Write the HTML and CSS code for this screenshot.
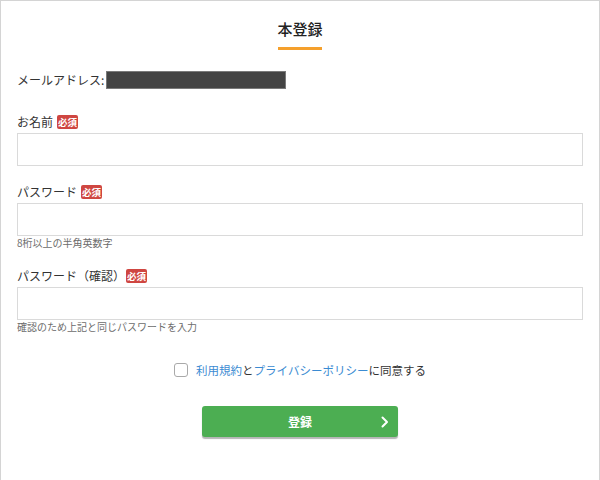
FILE: index.html
```html
<!DOCTYPE html>
<html lang="ja">
<head>
<meta charset="utf-8">
<link rel="stylesheet" href="styles.css">
</head>
<body>
<div class="page">
  <div class="title-wrap">
    <h1 class="title">本登録</h1>
    <div class="title-bar"></div>
  </div>

  <div class="email-row">
    <span class="email-label">メールアドレス:</span>
    <span class="email-mask"></span>
  </div>

  <div class="field field-first">
    <div class="label-row"><span class="label">お名前</span><span class="badge">必須</span></div>
    <div class="input"></div>
  </div>

  <div class="field">
    <div class="label-row"><span class="label">パスワード</span><span class="badge">必須</span></div>
    <div class="input"></div>
    <div class="hint">8桁以上の半角英数字</div>
  </div>

  <div class="field">
    <div class="label-row"><span class="label">パスワード（確認）</span><span class="badge badge-tight">必須</span></div>
    <div class="input"></div>
    <div class="hint">確認のため上記と同じパスワードを入力</div>
  </div>

  <div class="agree-row">
    <span class="checkbox"></span>
    <span class="agree-text"><a class="link">利用規約</a>と<a class="link">プライバシーポリシー</a>に同意する</span>
  </div>

  <div class="btn-row">
    <div class="btn">
      <span class="btn-text">登録</span>
      <svg class="chev" width="8" height="12" viewBox="0 0 8 12"><path d="M1.5 1.5 L6 6 L1.5 10.5" fill="none" stroke="#fff" stroke-width="2" stroke-linecap="round" stroke-linejoin="round"/></svg>
    </div>
  </div>
</div>
</body>
</html>
```

FILE: styles.css
```css
html, body {
  margin: 0;
  padding: 0;
  background: #fff;
}
body {
  font-family: "Noto Sans CJK JP", "Noto Sans", "Liberation Sans", sans-serif;
  color: #333;
}
.page {
  box-sizing: border-box;
  width: 600px;
  height: 480px;
  border: 1px solid #d4d4d4;
  border-bottom: none;
  padding: 0 16px;
  overflow: hidden;
}
.title-wrap {
  display: flex;
  flex-direction: column;
  align-items: center;
  padding-top: 18px;
}
.title {
  margin: 0;
  font-size: 15px;
  line-height: 20px;
  font-weight: 500;
  color: #222;
}
.title-bar {
  width: 44px;
  height: 3px;
  background: #f5a02c;
  margin-top: 8px;
}
.email-row {
  display: flex;
  align-items: center;
  height: 18px;
  margin-top: 21px;
  font-size: 12px;
}
.email-label {
  line-height: 18px;
}
.email-mask {
  display: inline-block;
  box-sizing: border-box;
  width: 180px;
  height: 18px;
  margin-left: 2px;
  background: #444;
  border: 1px solid #7a7a7a;
}
.field {
  margin-top: 17px;
}
.field-first {
  margin-top: 24px;
}
.label-row {
  display: flex;
  align-items: center;
  height: 18px;
  margin-bottom: 2px;
}
.label {
  font-size: 12px;
  line-height: 18px;
}
.badge {
  display: inline-block;
  margin-left: 4px;
  padding: 0 1px;
  height: 14px;
  line-height: 14px;
  font-size: 9.5px;
  font-weight: 700;
  color: #fff;
  background: #cf4641;
  border-radius: 2px;
}
.badge-tight {
  margin-left: 1px;
}
.input {
  box-sizing: border-box;
  height: 33px;
  border: 1px solid #dadada;
  background: #fff;
}
.hint {
  font-size: 10px;
  line-height: 14px;
  color: #6c6c6c;
}
.agree-row {
  display: flex;
  justify-content: center;
  align-items: center;
  height: 18px;
  margin-top: 27px;
}
.checkbox {
  box-sizing: border-box;
  width: 14px;
  height: 14px;
  border: 1px solid #a9a9a9;
  border-radius: 3px;
  background: #fff;
  margin-right: 8px;
}
.agree-text {
  font-size: 11.5px;
  line-height: 18px;
}
.link {
  color: #3b8bd2;
  text-decoration: none;
}
.btn-row {
  display: flex;
  justify-content: center;
  margin-top: 27px;
}
.btn {
  position: relative;
  display: flex;
  align-items: center;
  justify-content: center;
  width: 196px;
  height: 31px;
  background: #4cae52;
  border-radius: 3px;
  box-shadow: 0 2px 1px #b5b5b5;
}
.btn-text {
  color: #fff;
  font-size: 12px;
  font-weight: 700;
}
.chev {
  position: absolute;
  right: 9px;
  top: 10px;
}
```
